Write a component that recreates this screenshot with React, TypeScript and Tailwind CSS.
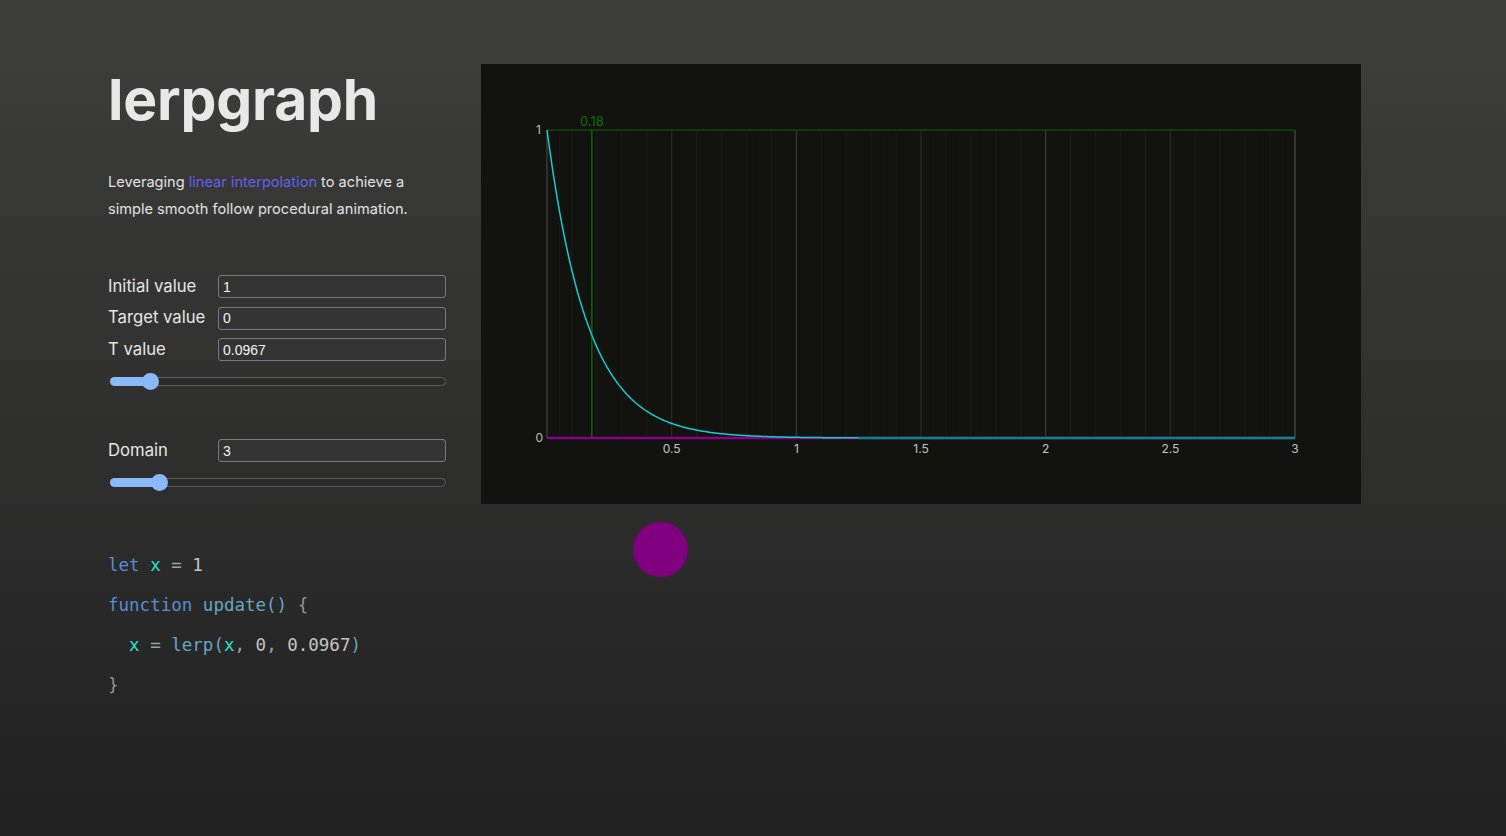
import React from "react";

const PLOT_L = 66; // 547-481
const PLOT_T = 66; // 130-64
const PLOT_W = 748;
const PLOT_H = 308;
const DOMAIN = 3;
const T = 0.0967;

function xFor(s: number) {
  return PLOT_L + (s / DOMAIN) * PLOT_W;
}
function yFor(v: number) {
  return PLOT_T + PLOT_H - v * PLOT_H;
}

function Chart() {
  const grid: React.ReactNode[] = [];
  for (let i = 1; i <= 60; i++) {
    const s = i * 0.05;
    const x = xFor(s);
    let color = "#151511";
    if (i % 20 === 0) color = "#3a3a37";
    else if (i % 10 === 0) color = "#282825";
    else if (i % 2 === 0) color = "#1a1a16";
    grid.push(
      <line key={i} x1={x} x2={x} y1={PLOT_T} y2={PLOT_T + PLOT_H} stroke={color} strokeWidth={1.2} />
    );
  }
  const pts: string[] = [];
  for (let px = 0; px <= PLOT_W; px += 2) {
    const s = (px / PLOT_W) * DOMAIN;
    const v = Math.pow(1 - T, 60 * s);
    pts.push(`${(PLOT_L + px).toFixed(1)},${yFor(v).toFixed(2)}`);
  }
  const ticks = [0.5, 1, 1.5, 2, 2.5, 3];
  const gx = xFor(0.18);
  return (
    <svg width={880} height={440} className="block">
      <rect x={0} y={0} width={880} height={440} fill="#12120e" />
      {grid}
      <line x1={PLOT_L} x2={PLOT_L} y1={PLOT_T} y2={PLOT_T + PLOT_H} stroke="#3a3a37" strokeWidth={1.5} />
      <line x1={PLOT_L + PLOT_W} x2={PLOT_L + PLOT_W} y1={PLOT_T} y2={PLOT_T + PLOT_H} stroke="#3a3a37" strokeWidth={1.5} />
      <line x1={PLOT_L} x2={PLOT_L + PLOT_W} y1={PLOT_T} y2={PLOT_T} stroke="#0c4a0c" strokeWidth={1.5} />
      <line x1={gx} x2={gx} y1={PLOT_T} y2={PLOT_T + PLOT_H} stroke="#0b8a0b" strokeWidth={1} />
      <text x={gx} y={PLOT_T - 4} fill="#0b700b" fontSize={13} textAnchor="middle" fontFamily="Inter, sans-serif">0.18</text>
      <line x1={PLOT_L} x2={PLOT_L + PLOT_W} y1={PLOT_T + PLOT_H} y2={PLOT_T + PLOT_H} stroke="#8a008a" strokeWidth={2.5} />
      <polyline points={pts.join(" ")} fill="none" stroke="#12cfcf" strokeWidth={1.5} />
      <line x1={xFor(1.25)} x2={PLOT_L + PLOT_W} y1={PLOT_T + PLOT_H} y2={PLOT_T + PLOT_H} stroke="#0a8585" strokeWidth={2.5} />
      <text x={PLOT_L - 6} y={PLOT_T + 4} fill="#bdbdbd" fontSize={12} textAnchor="end" fontFamily="Inter, sans-serif">1</text>
      <text x={PLOT_L - 4} y={PLOT_T + PLOT_H + 4} fill="#bdbdbd" fontSize={12} textAnchor="end" fontFamily="Inter, sans-serif">0</text>
      {ticks.map((t) => (
        <text key={t} x={xFor(t)} y={PLOT_T + PLOT_H + 15} fill="#c4c4c4" fontSize={12} textAnchor="middle" fontFamily="Inter, sans-serif">
          {t}
        </text>
      ))}
    </svg>
  );
}

function Slider({ fraction }: { fraction: number }) {
  const center = 8 + fraction * (336 - 16);
  return (
    <div role="slider" className="relative w-[336px] h-4 ml-[2px]">
      <div className="absolute left-0 right-0 top-[4px] h-[9px] rounded-full border border-[#5c5c5c] bg-[#2b2b2b]" />
      <div className="absolute left-0 top-[4px] h-[9px] rounded-full bg-[#8ab8f8]" style={{ width: center + 4 }} />
      <div className="absolute top-0 w-[17px] h-[17px] rounded-full bg-[#8ab8f8]" style={{ left: center - 8.5 }} />
    </div>
  );
}

function Field({ label, value }: { label: string; value: string }) {
  return (
    <div className="flex items-center h-[23px]">
      <label className="w-[110px] text-[16.7px] text-[#e6e6e6]">{label}</label>
      <input
        readOnly
        value={value}
        className="w-[228px] h-[23px] rounded-[3px] border border-[#7a7a7a] bg-[#343434] px-[4px] text-[14px] text-[#f2f2f2] outline-none font-['Liberation_Sans',Arial,sans-serif]"
      />
    </div>
  );
}

export default function App() {
  return (
    <div className="min-h-[836px] w-full bg-[linear-gradient(to_bottom,#3e3e3d,#212121)] font-['Inter',sans-serif]">
      <div className="flex pl-[108px] pt-[64px] gap-[35px]">
        <div className="w-[338px] flex flex-col">
          <h1 className="mt-[7px] text-[57px] leading-[58px] font-bold text-[#e8e8e8] tracking-[-0.2px]">lerpgraph</h1>
          <p className="mt-[40px] text-[14.6px] leading-[27px] text-[#e2e2e2]">
            Leveraging <span className="text-[#6161ee]">linear interpolation</span> to achieve a
            <br />
            simple smooth follow procedural animation.
          </p>
          <div className="mt-[52px] flex flex-col gap-[8.5px]">
            <Field label="Initial value" value="1" />
            <Field label="Target value" value="0" />
            <Field label="T value" value="0.0967" />
          </div>
          <div className="mt-[12px]">
            <Slider fraction={0.1} />
          </div>
          <div className="mt-[50px]">
            <Field label="Domain" value="3" />
          </div>
          <div className="mt-[12px]">
            <Slider fraction={0.131} />
          </div>
          <pre className="mt-[55px] text-[17.5px] leading-[40px] font-['DejaVu_Sans_Mono',monospace] text-[#c8c8c8]">
            <div>
              <span className="text-[#5a8cd4]">let</span> <span className="text-[#2ae0cc]">x</span>{" "}
              <span className="text-[#98a2ab]">=</span> <span className="text-[#c4c4c4]">1</span>
            </div>
            <div>
              <span className="text-[#5a8cd4]">function</span> <span className="text-[#67a6c2]">update()</span>{" "}
              <span className="text-[#8d959c]">{"{"}</span>
            </div>
            <div>
              {"  "}
              <span className="text-[#2ae0cc]">x</span> <span className="text-[#98a2ab]">=</span>{" "}
              <span className="text-[#67a6c2]">lerp(</span>
              <span className="text-[#2ae0cc]">x</span>
              <span className="text-[#98a2ab]">, </span>
              <span className="text-[#c4c4c4]">0</span>
              <span className="text-[#98a2ab]">, </span>
              <span className="text-[#c4c4c4]">0.0967</span>
              <span className="text-[#67a6c2]">)</span>
            </div>
            <div>
              <span className="text-[#8d959c]">{"}"}</span>
            </div>
          </pre>
        </div>
        <div className="flex flex-col">
          <div className="w-[880px] h-[440px]">
            <Chart />
          </div>
          <div className="mt-[18px] ml-[152px] w-[55px] h-[55px] rounded-full bg-[#800080]" />
        </div>
      </div>
    </div>
  );
}
